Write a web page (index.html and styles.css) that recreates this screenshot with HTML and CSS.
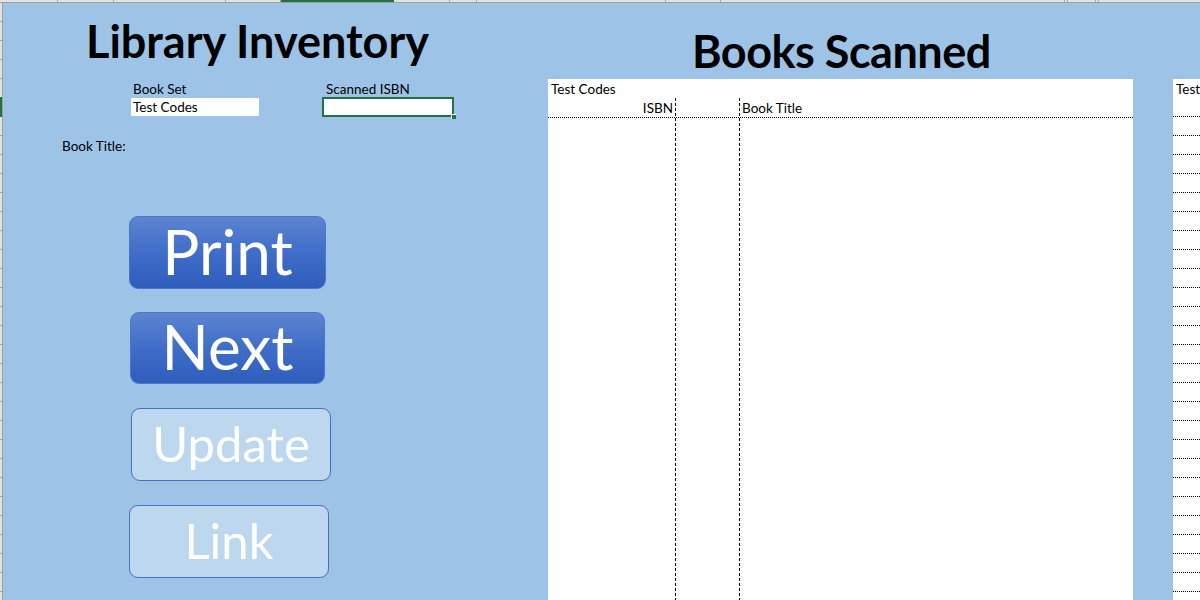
FILE: index.html
```html
<!DOCTYPE html>
<html lang="en">
<head>
<meta charset="utf-8">
<title>Library Inventory</title>
<link rel="stylesheet" href="styles.css">
</head>
<body>
<div class="app">
  <div class="colhead">
    <span class="ch w1"></span><span class="ch w2"></span><span class="ch w3"></span><span class="ch w4"></span><span class="ch w5 sel"></span><span class="ch w6"></span><span class="ch w7"></span><span class="ch w8"></span><span class="ch w9"></span><span class="ch w10"></span><span class="ch w11"></span><span class="ch w12"></span><span class="ch w13"></span><span class="ch w14"></span>
  </div>
  <div class="main">
    <div class="rowhead"><span class="rh-sel"></span></div>
    <div class="sheet">
      <section class="left">
        <h1 class="title">Library Inventory</h1>
        <div class="fields">
          <div class="field f-set">
            <div class="label">Book Set</div>
            <div class="cell">Test Codes</div>
          </div>
          <div class="field f-isbn">
            <div class="label">Scanned ISBN</div>
            <div class="cell selected"><span class="handle"></span></div>
          </div>
        </div>
        <div class="book-title">Book Title:</div>
        <div class="buttons">
          <button class="btn primary b-print">Print</button>
          <button class="btn primary b-next">Next</button>
          <button class="btn muted b-update">Update</button>
          <button class="btn muted b-link">Link</button>
        </div>
      </section>
      <section class="right">
        <h2 class="title2">Books Scanned</h2>
        <div class="t1">
          <div class="t1-cap">Test Codes</div>
          <div class="t1-grid">
            <div class="col c-isbn"><div class="hd hd-isbn">ISBN</div></div>
            <div class="col c-mid"><div class="hd"></div></div>
            <div class="col c-title"><div class="hd">Book Title</div></div>
          </div>
        </div>
      </section>
      <div class="gap"></div>
      <section class="t2">
        <div class="t2-cap">Test</div>
        <div class="t2-row"></div>
        <div class="t2-row"></div>
        <div class="t2-row"></div>
        <div class="t2-row"></div>
        <div class="t2-row"></div>
        <div class="t2-row"></div>
        <div class="t2-row"></div>
        <div class="t2-row"></div>
        <div class="t2-row"></div>
        <div class="t2-row"></div>
        <div class="t2-row"></div>
        <div class="t2-row"></div>
        <div class="t2-row"></div>
        <div class="t2-row"></div>
        <div class="t2-row"></div>
        <div class="t2-row"></div>
        <div class="t2-row"></div>
        <div class="t2-row"></div>
        <div class="t2-row"></div>
        <div class="t2-row"></div>
        <div class="t2-row"></div>
        <div class="t2-row"></div>
        <div class="t2-row"></div>
        <div class="t2-row"></div>
        <div class="t2-row"></div>
        <div class="t2-row"></div>
        <div class="t2-row"></div>
        <div class="t2-row"></div>
      </section>
    </div>
  </div>
</div>
</body>
</html>
```

FILE: styles.css
```css
* { box-sizing: border-box; margin: 0; padding: 0; }
html, body { width: 1200px; height: 600px; overflow: hidden; }
body { font-family: Lato, "Open Sans", sans-serif; color: #000; background: #9dc3e6; }

.app { display: flex; flex-direction: column; height: 600px; }

.colhead { display: flex; height: 3px; flex: 0 0 3px; background: #e2e2e2; border-bottom: 1px solid #a0a0a0; }
.ch { height: 100%; border-right: 1px solid #a8a8a8; }
.ch.sel { background: #217346; border-right-color: #217346; }
.w1 { flex: 0 0 58px; }
.w2 { flex: 0 0 56px; }
.w3 { flex: 0 0 112px; }
.w4 { flex: 0 0 55px; }
.w5 { flex: 0 0 113px; }
.w6 { flex: 0 0 56px; }
.w7 { flex: 0 0 27px; }
.w8 { flex: 0 0 189px; }
.w9 { flex: 0 0 55px; }
.w10 { flex: 0 0 344px; }
.w11 { flex: 0 0 3px; }
.w12 { flex: 0 0 28px; }
.w13 { flex: 0 0 3px; }
.w14 { flex: 1 1 auto; border-right: 0; }

.main { display: flex; flex: 1 1 auto; min-height: 0; }
.rowhead {
  flex: 0 0 3px; background-color: #e2e2e2; border-right: 1px solid #a0a0a0;
  background-image: repeating-linear-gradient(to bottom, transparent 0 18px, #a0a0a0 18px 19px);
  display: flex; flex-direction: column;
}
.rh-sel { display: block; width: 2px; height: 20px; margin-top: 94px; background: #217346; }

.sheet { display: flex; flex: 1 1 auto; background: #9dc3e6; }

/* left panel */
.left { flex: 0 0 545px; display: flex; flex-direction: column; }
.title { font-family: Lato, sans-serif; font-weight: 700; font-size: 45px; line-height: 76px; height: 76px; padding-left: 83px; letter-spacing: 0; white-space: nowrap; }
.fields { display: flex; margin-left: 128px; gap: 63px; height: 38px; }
.field { display: flex; flex-direction: column; }
.f-set { width: 128px; }
.f-isbn { width: 132px; }
.label { height: 19px; line-height: 20px; font-size: 13.5px; padding-left: 2px; }
.f-isbn .label { padding-left: 4px; }
.cell { height: 18px; line-height: 18px; background: #fff; font-size: 13.5px; padding-left: 2px; }
.cell.selected { height: 21px; margin-top: -1px; border: 2px solid #217346; position: relative; }
.handle { position: absolute; right: -4px; bottom: -4px; width: 5px; height: 5px; background: #217346; border: 1px solid #fff; border-right: 0; border-bottom: 0; }
.book-title { margin-top: 19px; margin-left: 59px; height: 19px; line-height: 20px; font-size: 13.5px; }

.buttons { display: flex; flex-direction: column; align-items: flex-start; margin-top: 61px; }
.btn { font-family: Lato, sans-serif; font-weight: 400; font-size: 62px; color: #fff; border-radius: 9px; border: 1px solid #4a74c8; display: flex; align-items: center; justify-content: center; line-height: 1; padding-bottom: 4px; }
.primary { background: linear-gradient(to bottom, #5d84d1 0%, #3f6dc8 50%, #2f5dbd 100%); border-color: #4d76c9; }
.muted { background: #bdd7ee; border-color: #4472c4; font-size: 49px; padding-bottom: 3px; }
.b-print { width: 197px; height: 73px; margin-left: 126px; }
.b-next { width: 195px; height: 72px; margin-left: 127px; margin-top: 23px; }
.b-update { width: 200px; height: 73px; margin-left: 128px; margin-top: 24px; }
.b-link { width: 200px; height: 73px; margin-left: 126px; margin-top: 24px; }

/* right panel */
.right { flex: 0 0 585px; display: flex; flex-direction: column; }
.title2 { font-family: Lato, sans-serif; font-weight: 700; font-size: 45px; height: 76px; line-height: 96px; padding-left: 144px; letter-spacing: -0.5px; white-space: nowrap; }
.t1 { flex: 1 1 auto; background: #fff; display: flex; flex-direction: column; }
.t1-cap { height: 19px; line-height: 20px; font-size: 13.5px; padding-left: 3px; }
.t1-grid { flex: 1 1 auto; display: flex; }
.col {
  background-image: repeating-linear-gradient(to bottom, #000 0 3px, transparent 3px 5px);
  background-size: 1px 100%; background-repeat: no-repeat; background-position: right top;
}
.c-isbn { flex: 0 0 128px; }
.c-mid { flex: 0 0 64px; }
.c-title { flex: 1 1 auto; background-image: none; }
.hd {
  height: 20px; line-height: 20px; font-size: 13.5px; padding-left: 2px;
  background-image: repeating-linear-gradient(to right, #000 0 1px, transparent 1px 2px);
  background-size: 100% 1px; background-repeat: no-repeat; background-position: left bottom;
}
.hd-isbn { text-align: right; padding-right: 3px; }

.gap { flex: 0 0 40px; }
.t2 { flex: 1 1 auto; background: #fff; margin-top: 76px; overflow: hidden; }
.t2-cap { height: 19px; line-height: 20px; font-size: 13.5px; padding-left: 3px; white-space: nowrap; overflow: hidden; }
.t2-row {
  height: 19px;
  background-image: repeating-linear-gradient(to right, #000 0 1px, transparent 1px 2px);
  background-size: 100% 1px; background-repeat: no-repeat; background-position: left bottom;
}
```
